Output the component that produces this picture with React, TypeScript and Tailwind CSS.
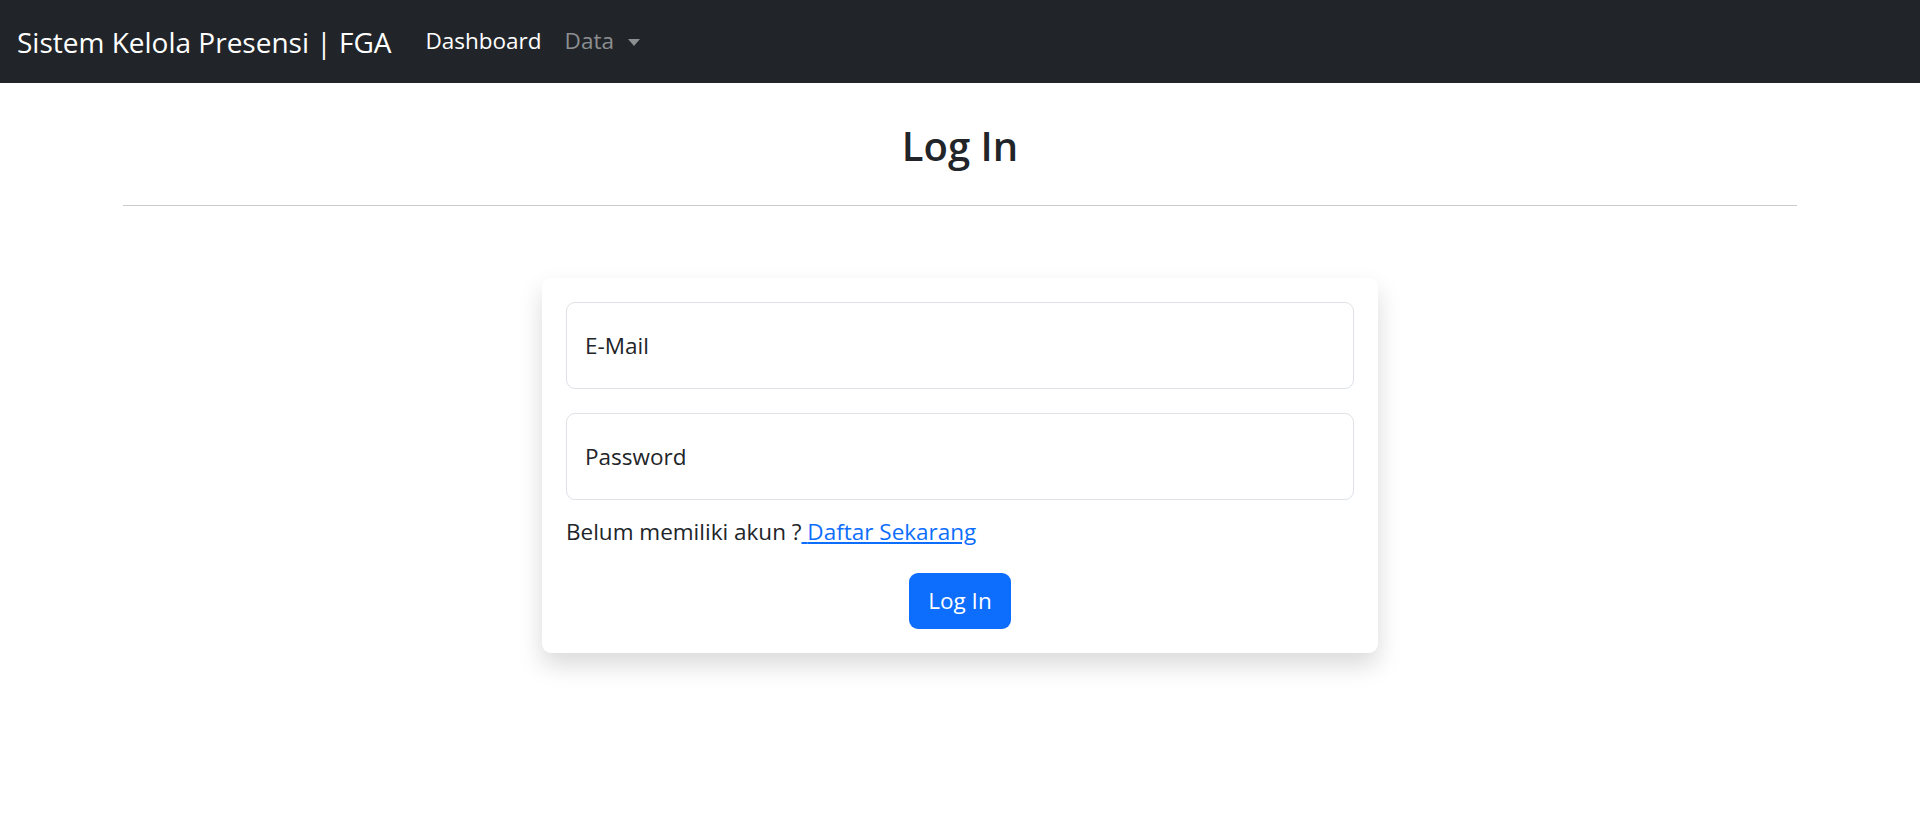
export default function App() {
  return (
    <div className="min-h-[817px] bg-white text-[#212529] font-['Open_Sans',sans-serif]">
      {/* Navbar */}
      <nav className="h-[83px] bg-[#212529] flex items-center pl-[17px]">
        <a href="#" className="text-white text-[28px] leading-none mr-[34px]">
          Sistem Kelola Presensi | FGA
        </a>
        <a href="#" className="text-white text-[22.5px] leading-none mr-[23px]">
          Dashboard
        </a>
        <button className="flex items-center gap-[14px] text-[#8c8e90] text-[22.5px] leading-none">
          Data
          <span className="w-0 h-0 border-x-[6px] border-x-transparent border-t-[7px] border-t-[#8c8e90] mt-[1px]" />
        </button>
      </nav>

      <main className="px-[123px]">
        <h3 className="text-[40px] leading-[1.2] font-semibold text-center pt-[39px]">Log In</h3>
        <hr className="mt-[35px] border-0 h-px bg-[#cccccc]" />

        {/* Card */}
        <div className="w-[836px] mx-auto mt-[72px] bg-white rounded-[9px] shadow-[0_12px_24px_rgba(0,0,0,0.15)] p-[24px]">
          <div className="h-[87px] border border-[#dee2e6] rounded-[9px] flex items-center px-[18px] text-[22.5px]">
            E-Mail
          </div>
          <div className="h-[87px] border border-[#dee2e6] rounded-[9px] flex items-center px-[18px] text-[22.5px] mt-[24px]">
            Password
          </div>
          <p className="text-[22.5px] leading-[36px] mt-[14px]">
            Belum memiliki akun ?
            <a href="#" className="text-[#0d6efd] underline">
              {" "}Daftar Sekarang
            </a>
          </p>
          <div className="flex justify-center mt-[23px]">
            <button className="h-[56px] px-[19px] rounded-[9px] bg-[#0d6efd] text-white text-[22.5px]">Log In</button>
          </div>
        </div>
      </main>
    </div>
  );
}
